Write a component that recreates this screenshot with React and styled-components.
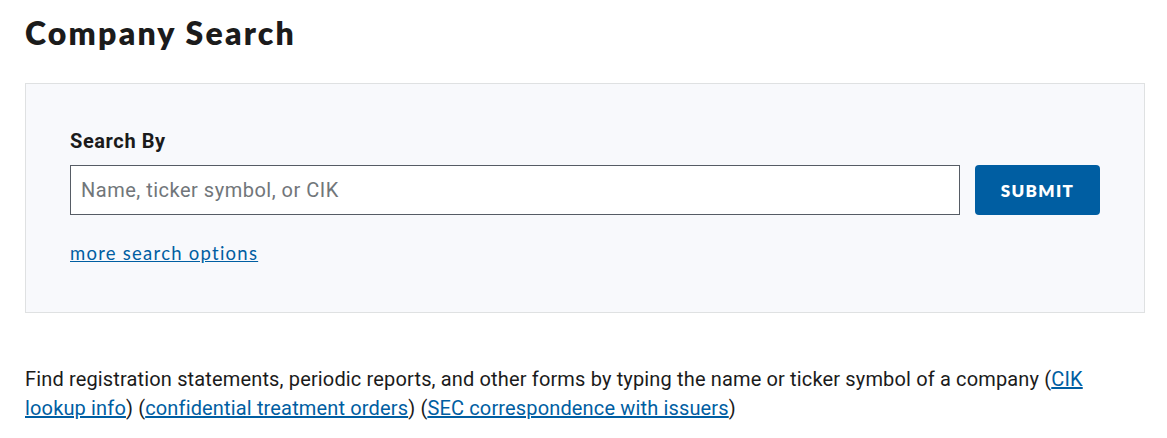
import React from 'react';
import styled, { createGlobalStyle } from 'styled-components';

const GlobalStyle = createGlobalStyle`
  body {
    margin: 0;
    background: #fff;
    font-family: Roboto, "Liberation Sans", sans-serif;
    color: #1b1b1b;
  }
`;

const Page = styled.main`
  padding: 13px 22px 0 25px;
`;

const Title = styled.h1`
  font-family: Lato, "Noto Sans", sans-serif;
  font-weight: 800;
  font-size: 32px;
  letter-spacing: 2.2px;
  line-height: 40px;
  margin: 0 0 30px;
  color: #1b1b1b;
`;

const Panel = styled.section`
  background: #f8f9fc;
  border: 1px solid #dfe1e2;
  padding: 44px 44px 46px 44px;
`;

const Label = styled.label`
  display: block;
  font-weight: 700;
  font-size: 20px;
  letter-spacing: 0.6px;
  line-height: 26px;
  margin-bottom: 11px;
`;

const Row = styled.div`
  display: flex;
  gap: 15px;
`;

const Input = styled.input`
  flex: 1;
  height: 50px;
  box-sizing: border-box;
  border: 1px solid #565c65;
  background: #fff;
  padding: 0 10px;
  font-family: Roboto, "Liberation Sans", sans-serif;
  font-size: 20px;
  letter-spacing: 0.5px;
  &::placeholder {
    color: #71767a;
  }
`;

const Button = styled.button`
  width: 125px;
  height: 50px;
  border: none;
  border-radius: 4px;
  background: #005ea2;
  color: #fff;
  font-family: Lato, "Noto Sans", sans-serif;
  font-weight: 800;
  font-size: 17px;
  letter-spacing: 1.3px;
  cursor: pointer;
`;

const OptionsLink = styled.a`
  display: inline-block;
  margin-top: 25px;
  font-family: Lato, "Noto Sans", sans-serif;
  font-size: 18.5px;
  line-height: 26px;
  color: #005ea2;
  letter-spacing: 1.25px;
`;

const Intro = styled.p`
  margin: 52px 0 0;
  font-size: 20px;
  letter-spacing: 0.15px;
  line-height: 29px;
`;

const TextLink = styled.a`
  color: #005ea2;
`;

export default function App() {
  return (
    <>
      <GlobalStyle />
      <Page>
        <Title>Company Search</Title>
        <Panel>
          <Label htmlFor="company">Search By</Label>
          <Row>
            <Input id="company" placeholder="Name, ticker symbol, or CIK" />
            <Button>SUBMIT</Button>
          </Row>
          <OptionsLink href="#">more search options</OptionsLink>
        </Panel>
        <Intro>
          Find registration statements, periodic reports, and other forms by typing the name or ticker symbol of a company (<TextLink href="#">CIK lookup info</TextLink>) (<TextLink href="#">confidential treatment orders</TextLink>) (<TextLink href="#">SEC correspondence with issuers</TextLink>)
        </Intro>
      </Page>
    </>
  );
}
